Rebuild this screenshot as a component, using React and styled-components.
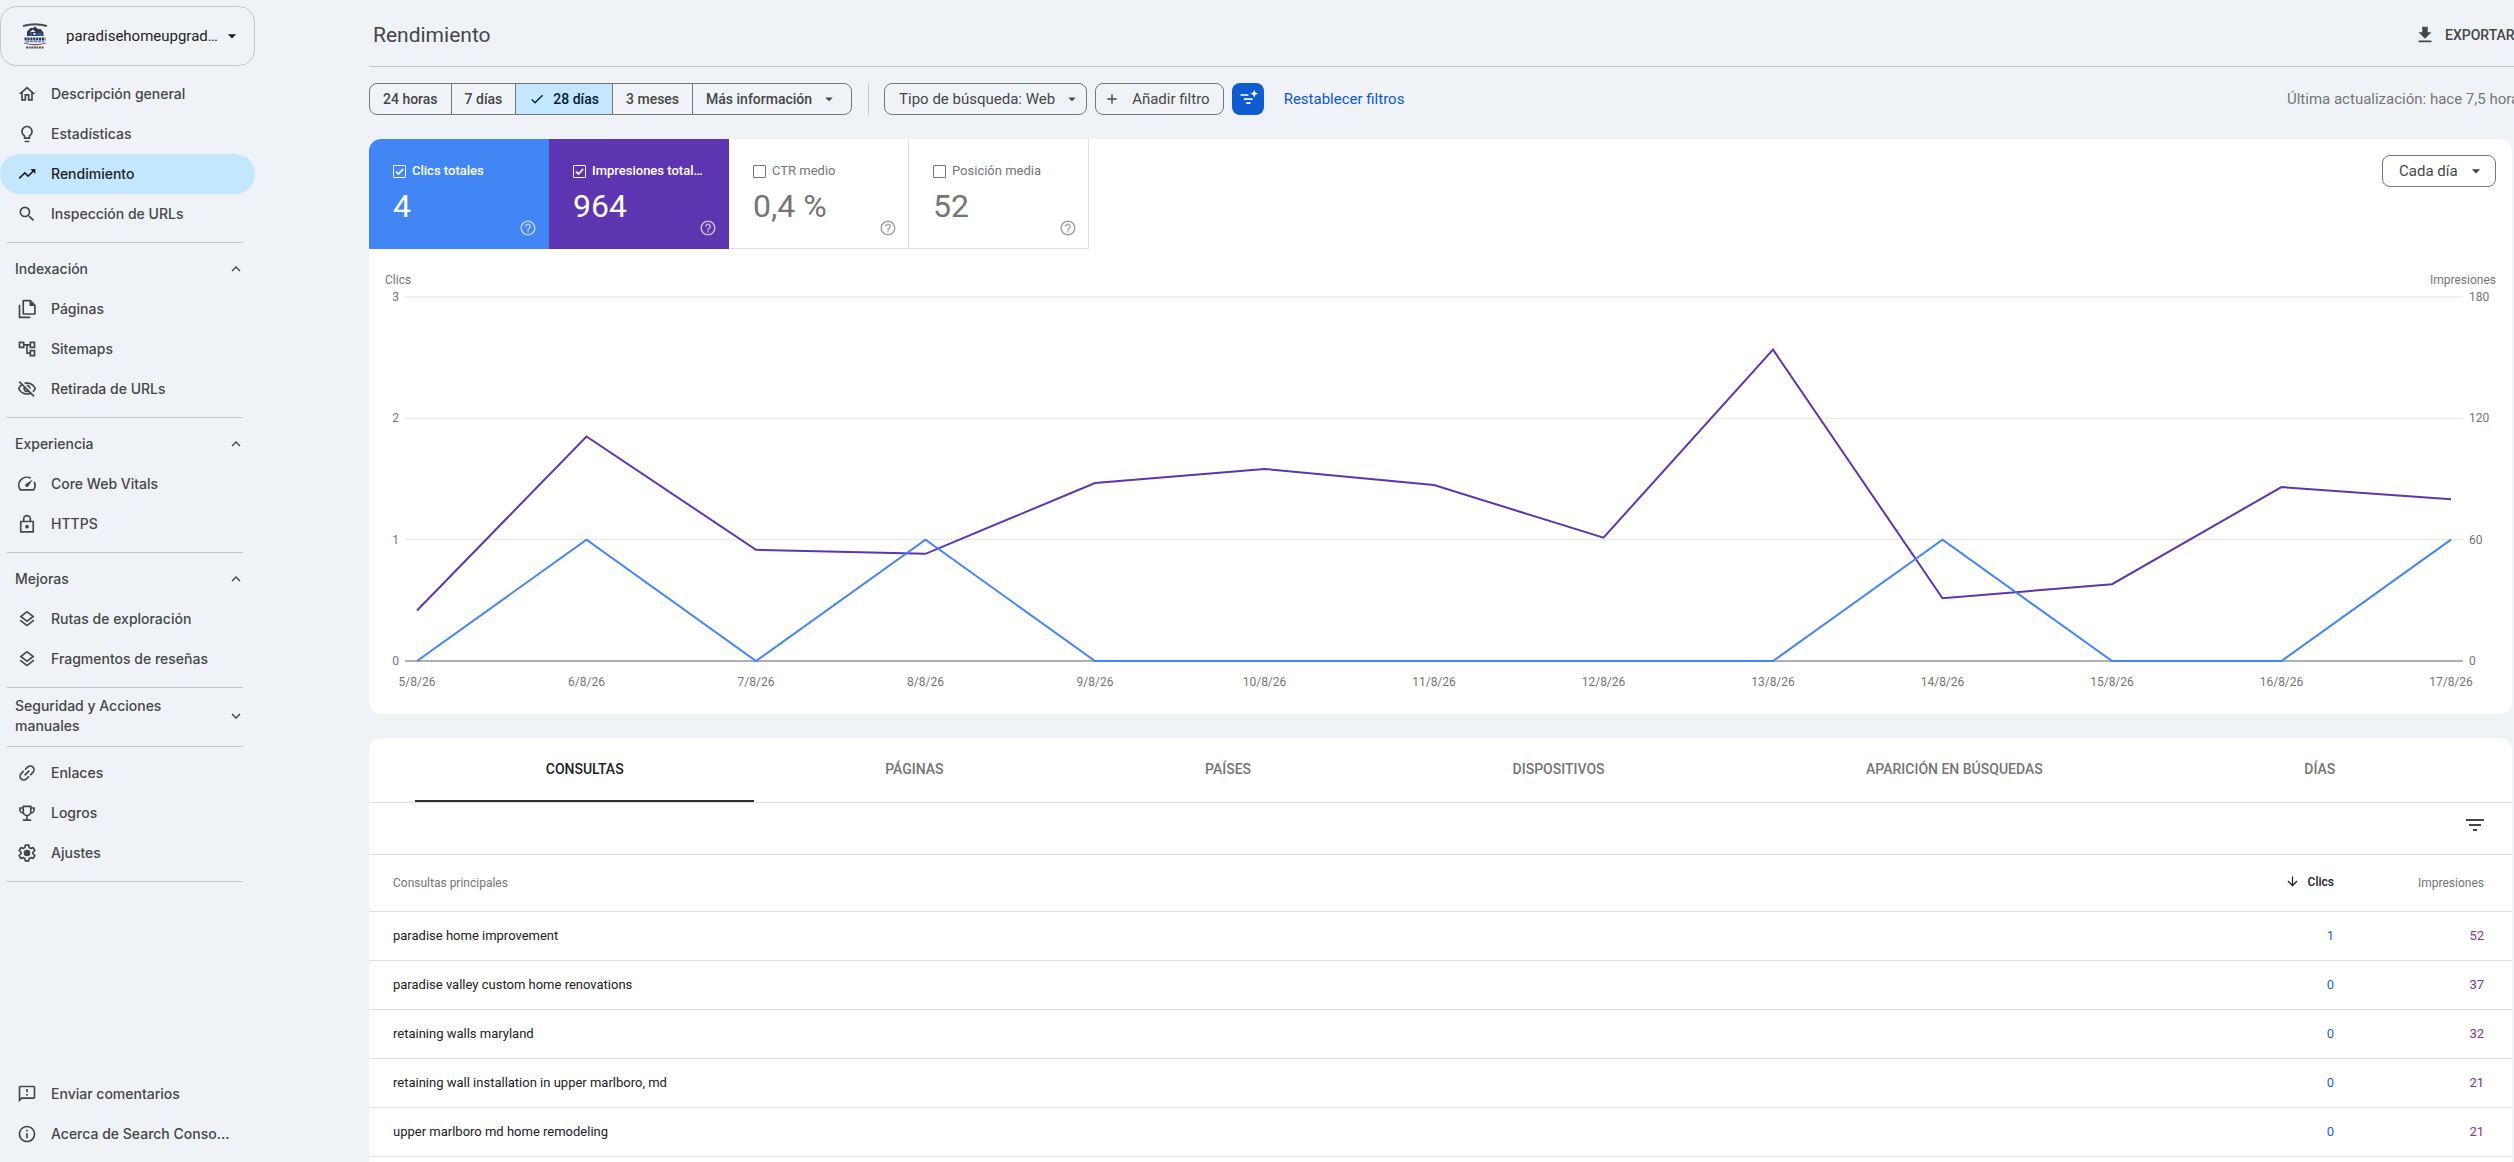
import React, { useLayoutEffect, useRef, useState } from "react";
import styled, { createGlobalStyle } from "styled-components";
import {
  MdOutlineHome,
  MdLightbulbOutline,
  MdTrendingUp,
  MdSearch,
  MdArrowDropDown,
  MdExpandLess,
  MdExpandMore,
  MdOutlineVisibilityOff,
  MdOutlineLayers,
  MdOutlineInfo,
  MdOutlineFeedback,
  MdHelpOutline,
  MdCheck,
  MdAdd,
  MdFilterList,
  MdArrowDownward,
  MdFileDownload,
} from "react-icons/md";

const sans = `Inter, Roboto, "Liberation Sans", sans-serif`;
const roboto = `Roboto, "Liberation Sans", sans-serif`;

const GlobalStyle = createGlobalStyle`
  *, *::before, *::after { box-sizing: border-box; }
  body {
    margin: 0;
    overflow-x: hidden;
    background: #eff3f8;
    color: #444746;
    font-family: ${roboto};
  }
  button, select { font: inherit; color: inherit; }
  a { color: inherit; text-decoration: none; }
`;

const Page = styled.div`
  display: flex;
  min-height: 100vh;
`;

/* ---------- Sidebar ---------- */

const Sidebar = styled.aside`
  display: flex;
  flex-direction: column;
  flex: none;
  width: 255px;
  padding: 6px 0 8px;
  font-family: ${sans};
`;

const PropertyButton = styled.button`
  display: flex;
  align-items: center;
  height: 60px;
  margin-bottom: 8px;
  padding: 0 12px 0 21px;
  border: 1px solid #c4c7c5;
  border-radius: 16px;
  background: transparent;
  color: #1f1f1f;
  font-family: ${roboto};
  font-size: 15px;
  text-align: left;
`;

const PropertyName = styled.span`
  flex: 1;
  min-width: 0;
  margin-left: 18px;
  overflow: hidden;
  text-overflow: ellipsis;
  white-space: nowrap;
`;

const NavLink = styled.a`
  display: flex;
  align-items: center;
  gap: 14px;
  height: 40px;
  padding: 0 24px 0 17px;
  border-radius: 20px;
  background: ${(p) => (p.$active ? "#c2e7ff" : "transparent")};
  color: ${(p) => (p.$active ? "#1f1f1f" : "#444746")};
  font-size: 14px;
  font-weight: 500;

  svg { flex: none; }
`;

const NavText = styled.span`
  padding-bottom: 2px;
  white-space: nowrap;
`;

const NavDivider = styled.hr`
  width: 236px;
  height: 1px;
  margin: 8px 0 6px 7px;
  border: 0;
  background: #c4c7c5;
`;

const SectionButton = styled.button`
  display: flex;
  align-items: center;
  justify-content: space-between;
  min-height: 40px;
  padding: 2px 10px 2px 15px;
  border: 0;
  background: transparent;
  font-size: 14px;
  font-weight: 500;
  line-height: 20px;
  text-align: left;

  span { max-width: 170px; }
`;

const SidebarFooter = styled.div`
  margin-top: auto;
`;

/* ---------- Header and filters ---------- */

const Main = styled.main`
  display: flex;
  flex-direction: column;
  flex: 1;
  min-width: 0;
  margin-left: 114px;
  overflow: hidden;
`;

const Header = styled.header`
  display: flex;
  align-items: center;
  justify-content: space-between;
  height: 67px;
  padding: 4px 0 0 4px;
  border-bottom: 1px solid #c4c7c5;
`;

const Title = styled.h1`
  margin: 0;
  font-size: 21px;
  font-weight: 400;
  line-height: 28px;
`;

const ExportButton = styled.button`
  display: flex;
  align-items: center;
  gap: 9px;
  width: 100px;
  padding: 0;
  overflow: hidden;
  border: 0;
  background: transparent;
  font-size: 14px;
  font-weight: 500;
  white-space: nowrap;
  svg { flex: none; }
`;

const FilterBar = styled.div`
  display: flex;
  align-items: center;
  gap: 8px;
  padding: 16px 0 24px;
  font-size: 15px;
`;

const RangeGroup = styled.div`
  display: flex;
  height: 32px;
  border: 1px solid #747775;
  border-radius: 8px;
  overflow: hidden;
  font-size: 14px;
  font-weight: 500;
`;

const RangeButton = styled.button`
  display: flex;
  align-items: center;
  justify-content: center;
  gap: 8px;
  padding: 0 13px;
  border: 0;
  border-left: ${(p) => (p.$first ? 0 : "1px solid #747775")};
  background: ${(p) => (p.$active ? "#c2e7ff" : "transparent")};
  color: ${(p) => (p.$active ? "#001d35" : "inherit")};
`;

const BarDivider = styled.div`
  width: 1px;
  height: 32px;
  margin: 0 7px 0 8px;
  background: #c4c7c5;
`;

const Chip = styled.button`
  display: flex;
  align-items: center;
  gap: ${(p) => (p.$lead ? "12px" : "8px")};
  height: 32px;
  padding: ${(p) => (p.$lead ? "0 13px 0 8px" : "0 5px 0 14px")};
  border: 1px solid #747775;
  border-radius: 8px;
  background: transparent;
  white-space: nowrap;
`;

const SmartFilterButton = styled.button`
  display: flex;
  align-items: center;
  justify-content: center;
  width: 32px;
  height: 32px;
  padding: 0;
  border: 0;
  border-radius: 8px;
  background: #0f5bd0;
  color: #fff;
`;

const ResetButton = styled.button`
  padding: 0 12px;
  border: 0;
  background: transparent;
  color: #0b57d0;
`;

const LastUpdate = styled.div`
  width: 227px;
  margin-left: auto;
  overflow: hidden;
  color: #757575;
  white-space: nowrap;
`;

/* ---------- Chart card ---------- */

const ChartCard = styled.section`
  flex: none;
  margin-right: 2px;
  overflow: hidden;
  border-radius: 12px;
  background: #fff;
`;

const CardTop = styled.div`
  display: flex;
  align-items: flex-start;
  justify-content: space-between;
  padding-right: 16px;
`;

const Metrics = styled.div`
  display: flex;
`;

const Metric = styled.div`
  display: flex;
  flex-direction: column;
  width: 180px;
  height: 110px;
  padding: 24px ${(p) => (p.$fill ? "12px" : "11px")} 12px 24px;
  border: solid #e0e0e0;
  border-width: ${(p) => (p.$fill ? 0 : "0 1px 1px 0")};
  background: ${(p) => p.$fill || "#fff"};
  color: ${(p) => (p.$fill ? "#fff" : "#757575")};
`;

const MetricLabel = styled.label`
  display: flex;
  align-items: center;
  gap: 6px;
  height: 16px;
  font-size: 13px;
  font-weight: ${(p) => (p.$on ? 500 : 400)};

  span {
    max-width: 112px;
    overflow: hidden;
    text-overflow: ellipsis;
    white-space: nowrap;
  }
`;

const MetricCheck = styled.input`
  flex: none;
  width: 13px;
  height: 13px;
  margin: 2px 0 0;
  appearance: none;
  border: 1px solid currentColor;
  border-radius: 1px;
  color: inherit;

  &:checked {
    background: center / 11px 11px no-repeat
      url("data:image/svg+xml,%3Csvg xmlns='http://www.w3.org/2000/svg' viewBox='0 0 11 11'%3E%3Cpath d='M2 5.6l2.4 2.4L9.2 3' fill='none' stroke='white' stroke-width='1.8'/%3E%3C/svg%3E");
  }
`;

const MetricValue = styled.div`
  margin-top: 9px;
  font-size: 32px;
  line-height: 38px;
`;

const MetricHelp = styled.button`
  display: flex;
  align-self: flex-end;
  margin-top: -6px;
  padding: 0;
  border: 0;
  background: transparent;
  color: inherit;
  opacity: 0.65;
`;

const SelectBox = styled.div`
  display: grid;
  align-items: center;
  width: 114px;
  height: 32px;
  margin-top: 16px;

  select, svg { grid-area: 1 / 1; }
  svg { justify-self: end; margin-right: 10px; pointer-events: none; }
`;

const IntervalSelect = styled.select`
  width: 100%;
  height: 32px;
  padding: 0 32px 0 16px;
  appearance: none;
  border: 1px solid #747775;
  border-radius: 8px;
  background: #fff;
  font-size: 15px;
`;

const ChartBox = styled.div`
  height: 449px;
  margin-top: 16px;

  svg { display: block; font-size: 12px; }
  text { fill: #757575; }
`;

/* ---------- Table card ---------- */

const TableCard = styled.section`
  flex: 1;
  margin: 24px 2px 0 0;
  overflow: hidden;
  border-radius: 12px 12px 0 0;
  background: #fff;
`;

const Tabs = styled.div`
  display: flex;
  height: 65px;
  padding: 0 46px;
  border-bottom: 1px solid #e0e0e0;
`;

const Tab = styled.button`
  flex: 1 1 auto;
  padding: 0;
  border: 0;
  border-bottom: 2px solid ${(p) => (p.$active ? "#332e2e" : "transparent")};
  background: transparent;
  color: ${(p) => (p.$active ? "#202124" : "#757575")};
  font-size: 14px;
  font-weight: 500;
`;

const TableTools = styled.div`
  display: flex;
  align-items: center;
  justify-content: flex-end;
  height: 52px;
  padding: 0 25px 8px;
  border-bottom: 1px solid #e0e0e0;
`;

const IconButton = styled.button`
  display: flex;
  padding: 0;
  border: 0;
  background: transparent;
`;

const Table = styled.table`
  width: 100%;
  border-collapse: separate;
  border-spacing: 0;
  table-layout: fixed;

  th, td {
    padding: 0 28px 0 0;
    border-bottom: 1px solid #e0e0e0;
    text-align: right;
  }
  th:first-child, td:first-child {
    padding-right: 0;
    padding-left: 24px;
    text-align: left;
  }
  th {
    height: 57px;
    color: #757575;
    font-size: 12px;
    font-weight: 400;
  }
  td { padding-bottom: 2px; }
`;

const Col = styled.col`
  width: ${(p) => p.$width};
`;

const SortHeader = styled.button`
  display: inline-flex;
  align-items: center;
  gap: 8px;
  padding: 0;
  border: 0;
  background: transparent;
  color: #202124;
  font-weight: 500;
`;

const Cell = styled.td`
  height: 49px;
  color: ${(p) => p.$color || "#202124"};
  font-size: 13px;
`;

/* ---------- Icons ---------- */

const Glyph = ({ children, size = 20 }) => (
  <svg width={size} height={size} viewBox="0 0 24 24" fill="none" stroke="currentColor" strokeWidth="2">
    {children}
  </svg>
);

const SitemapIcon = () => (
  <Glyph>
    <path d="M3 4h5v6H3zM16 4h5v6h-5zM16 14h5v6h-5zM8 7h8M12 7v10h4" />
  </Glyph>
);

const PagesIcon = () => (
  <Glyph>
    <path d="M7.500 2H16l5.500 5.500V18h-14z" strokeLinejoin="round" />
    <path d="M15 2v6.500h6.500z" fill="currentColor" stroke="none" />
    <path d="M3 7v15h13" />
  </Glyph>
);

const LockIcon = () => (
  <Glyph>
    <path d="M4.500 9h15v12.500h-15zM8 9V6a4 4 0 0 1 8 0v3" strokeLinejoin="round" />
    <circle cx="12" cy="15.200" r="2.200" fill="currentColor" stroke="none" />
  </Glyph>
);

const SpeedIcon = () => (
  <Glyph>
    <path d="M16.500 5.200A9.500 9.500 0 0 0 4 19h16a9.500 9.500 0 0 0 .6-9.600" strokeLinejoin="round" />
    <path d="M19 6.500l-5.600 8.500a2 2 0 0 1-2.900-2.900z" fill="currentColor" stroke="none" />
  </Glyph>
);

const LinkIcon = () => (
  <Glyph>
    <g transform="rotate(-45 12 12)">
      <path d="M11 7.500H6.500a4.500 4.500 0 0 0 0 9H11M13 7.500h4.500a4.500 4.500 0 0 1 0 9H13M8 12h8" />
    </g>
  </Glyph>
);

const TrophyIcon = () => (
  <Glyph>
    <path d="M7.500 4h9v6.500a4.500 4.500 0 0 1-9 0zM7.500 6H3.500v2a4 4 0 0 0 4 4M16.500 6h4v2a4 4 0 0 1-4 4M12 15v5M7 20.500h10" />
  </Glyph>
);

const GearIcon = () => (
  <Glyph>
    <path
      d="M10 2.500h4l.6 2.900 2 1.100 2.800-.9 2 3.400-2.200 2v2l2.200 2-2 3.400-2.800-.9-2 1.100-.6 2.900h-4l-.6-2.900-2-1.100-2.800.9-2-3.400 2.200-2v-2l-2.200-2 2-3.400 2.800.9 2-1.100z"
      strokeLinejoin="round"
    />
    <circle cx="12" cy="12" r="4" fill="currentColor" stroke="none" />
  </Glyph>
);

const SmartFilterIcon = () => (
  <Glyph>
    <path d="M3 7.200h9.500M7 12.200h10.500M10 17h5" />
    <path d="M19.500 .8l1.400 3.300 3.300 1.400-3.300 1.400-1.400 3.300-1.400-3.300-3.300-1.400 3.300-1.400z" fill="currentColor" stroke="none" />
  </Glyph>
);

const PropertyLogo = () => (
  <svg width="26" height="26" viewBox="0 0 26 26">
    <path d="M1 3Q13-.5 25 3" fill="none" stroke="#4a4a4a" strokeWidth="2.200" />
    <path d="M5 13V8.500L8.500 5H11l2-1.500L16 6h2.500l3 3.500V13z" fill="#33384a" />
    <path d="M8 9h2v4H8zM15 10h5v3h-5z" fill="#2c57b8" />
    <path d="M8 9l3-2.500L13.500 9M11.500 10h2v2h-2z" fill="#e8ecf4" />
    <path d="M2.500 16h21" stroke="#27345f" strokeWidth="3" strokeDasharray="2.200 .7" />
    <path d="M4 18.700h18" stroke="#2c57b8" strokeWidth="1" strokeDasharray="3 1" />
    <path d="M2 20q11 3.500 22 0" fill="none" stroke="#8b5a5f" strokeWidth="1.300" />
    <path d="M4 24.500h18" stroke="#555" strokeWidth="2" strokeDasharray="2 .6" />
  </svg>
);

/* ---------- Data ---------- */

const mainNav = [
  ["Descripción general", <MdOutlineHome size={20} />],
  ["Estadísticas", <MdLightbulbOutline size={20} />],
  ["Rendimiento", <MdTrendingUp size={20} />],
  ["Inspección de URLs", <MdSearch size={20} />],
];

const sections = [
  {
    title: "Indexación",
    items: [
      ["Páginas", <PagesIcon />],
      ["Sitemaps", <SitemapIcon />],
      ["Retirada de URLs", <MdOutlineVisibilityOff size={20} />],
    ],
  },
  {
    title: "Experiencia",
    items: [
      ["Core Web Vitals", <SpeedIcon />],
      ["HTTPS", <LockIcon />],
    ],
  },
  {
    title: "Mejoras",
    items: [
      ["Rutas de exploración", <MdOutlineLayers size={20} />],
      ["Fragmentos de reseñas", <MdOutlineLayers size={20} />],
    ],
  },
  { title: "Seguridad y Acciones manuales", items: [] },
];

const toolsNav = [
  ["Enlaces", <LinkIcon />],
  ["Logros", <TrophyIcon />],
  ["Ajustes", <GearIcon />],
];

const footerNav = [
  ["Enviar comentarios", <MdOutlineFeedback size={20} />],
  ["Acerca de Search Conso…", <MdOutlineInfo size={20} />],
];

const metrics = [
  { label: "Clics totales", value: "4", fill: "#4285f4" },
  { label: "Impresiones totales", value: "964", fill: "#5e35b1" },
  { label: "CTR medio", value: "0,4 %" },
  { label: "Posición media", value: "52" },
];

const impressions = [25, 111, 55, 53, 88, 95, 87, 61, 154, 31, 38, 86, 80];
const clicks = [0, 1, 0, 1, 0, 0, 0, 0, 0, 1, 0, 0, 1];

const tabs = ["CONSULTAS", "PÁGINAS", "PAÍSES", "DISPOSITIVOS", "APARICIÓN EN BÚSQUEDAS", "DÍAS"];

const queries = [
  ["paradise home improvement", 1, 52],
  ["paradise valley custom home renovations", 0, 37],
  ["retaining walls maryland", 0, 32],
  ["retaining wall installation in upper marlboro, md", 0, 21],
  ["upper marlboro md home remodeling", 0, 21],
];

/* ---------- Components ---------- */

function NavItems({ items, active }) {
  return items.map(([label, icon]) => (
    <NavLink key={label} href="#" $active={label === active}>
      {icon}
      <NavText>{label}</NavText>
    </NavLink>
  ));
}

function Chart() {
  const box = useRef(null);
  const [width, setWidth] = useState(1200);

  useLayoutEffect(() => {
    const measure = () => setWidth(box.current.clientWidth);
    measure();
    const observer = new ResizeObserver(measure);
    observer.observe(box.current);
    return () => observer.disconnect();
  }, []);

  const top = 32;
  const bottom = 396;
  const left = 36;
  const right = width - 49;
  const x = (i) => left + 12 + (i * (right - left - 24)) / (clicks.length - 1);
  const y = (ratio) => bottom - ratio * (bottom - top);
  const line = (values, max) => values.map((v, i) => `${x(i)},${y(v / max)}`).join(" ");

  return (
    <ChartBox ref={box}>
      <svg width={width} height="449" role="img" aria-label="Clics e impresiones por día">
        <text x="16" y="19">Clics</text>
        <text x={width - 16} y="19" textAnchor="end">Impresiones</text>
        {[0, 1, 2, 3].map((n) => (
          <g key={n}>
            <line x1={left} x2={right} y1={y(n / 3)} y2={y(n / 3)} stroke={n ? "#e4e4e4" : "#616161"} />
            <text x={left - 6} y={y(n / 3) + 4} textAnchor="end">{n}</text>
            <text x={right + 6} y={y(n / 3) + 4}>{n * 60}</text>
          </g>
        ))}
        {clicks.map((_, i) => (
          <text key={i} x={x(i)} y="421" textAnchor="middle">{`${i + 5}/8/26`}</text>
        ))}
        <polyline points={line(impressions, 180)} fill="none" stroke="#5e35b1" strokeWidth="2" />
        <polyline points={line(clicks, 3)} fill="none" stroke="#4285f4" strokeWidth="2" />
      </svg>
    </ChartBox>
  );
}

export default function App() {
  return (
    <Page>
      <GlobalStyle />
      <Sidebar>
        <PropertyButton>
          <PropertyLogo />
          <PropertyName>paradisehomeupgrades.com</PropertyName>
          <MdArrowDropDown size={20} />
        </PropertyButton>
        <NavItems items={mainNav} active="Rendimiento" />
        {sections.map(({ title, items }) => (
          <React.Fragment key={title}>
            <NavDivider />
            <SectionButton>
              <span>{title}</span>
              {items.length ? <MdExpandLess size={18} /> : <MdExpandMore size={18} />}
            </SectionButton>
            <NavItems items={items} />
          </React.Fragment>
        ))}
        <NavDivider />
        <NavItems items={toolsNav} />
        <NavDivider />
        <SidebarFooter>
          <NavItems items={footerNav} />
        </SidebarFooter>
      </Sidebar>

      <Main>
        <Header>
          <Title>Rendimiento</Title>
          <ExportButton>
            <MdFileDownload size={22} />
            EXPORTAR
          </ExportButton>
        </Header>

        <FilterBar>
          <RangeGroup>
            <RangeButton $first>24 horas</RangeButton>
            <RangeButton>7 días</RangeButton>
            <RangeButton $active>
              <MdCheck size={16} />
              28 días
            </RangeButton>
            <RangeButton>3 meses</RangeButton>
            <RangeButton>
              Más información
              <MdArrowDropDown size={18} />
            </RangeButton>
          </RangeGroup>
          <BarDivider />
          <Chip>
            Tipo de búsqueda: Web
            <MdArrowDropDown size={18} />
          </Chip>
          <Chip $lead>
            <MdAdd size={16} />
            Añadir filtro
          </Chip>
          <SmartFilterButton aria-label="Filtros inteligentes">
            <SmartFilterIcon />
          </SmartFilterButton>
          <ResetButton>Restablecer filtros</ResetButton>
          <LastUpdate>Última actualización: hace 7,5 horas</LastUpdate>
        </FilterBar>

        <ChartCard>
          <CardTop>
            <Metrics>
              {metrics.map(({ label, value, fill }) => (
                <Metric key={label} $fill={fill}>
                  <MetricLabel $on={!!fill}>
                    <MetricCheck type="checkbox" defaultChecked={!!fill} />
                    <span>{label}</span>
                  </MetricLabel>
                  <MetricValue>{value}</MetricValue>
                  <MetricHelp aria-label="Ayuda">
                    <MdHelpOutline size={18} />
                  </MetricHelp>
                </Metric>
              ))}
            </Metrics>
            <SelectBox>
              <IntervalSelect aria-label="Intervalo" defaultValue="dia">
                <option value="dia">Cada día</option>
                <option value="semana">Cada semana</option>
              </IntervalSelect>
              <MdArrowDropDown size={20} />
            </SelectBox>
          </CardTop>
          <Chart />
        </ChartCard>

        <TableCard>
          <Tabs role="tablist">
            {tabs.map((tab, i) => (
              <Tab key={tab} role="tab" aria-selected={i === 0} $active={i === 0}>
                {tab}
              </Tab>
            ))}
          </Tabs>
          <TableTools>
            <IconButton aria-label="Filtrar filas">
              <MdFilterList size={24} />
            </IconButton>
          </TableTools>
          <Table>
            <colgroup>
              <Col $width="auto" />
              <Col $width="151px" />
              <Col $width="150px" />
            </colgroup>
            <thead>
              <tr>
                <th>Consultas principales</th>
                <th>
                  <SortHeader>
                    <MdArrowDownward size={15} />
                    Clics
                  </SortHeader>
                </th>
                <th>Impresiones</th>
              </tr>
            </thead>
            <tbody>
              {queries.map(([query, c, imp]) => (
                <tr key={query}>
                  <Cell>{query}</Cell>
                  <Cell $color="#1a67d2">{c}</Cell>
                  <Cell $color="#8430a8">{imp}</Cell>
                </tr>
              ))}
            </tbody>
          </Table>
        </TableCard>
      </Main>
    </Page>
  );
}
